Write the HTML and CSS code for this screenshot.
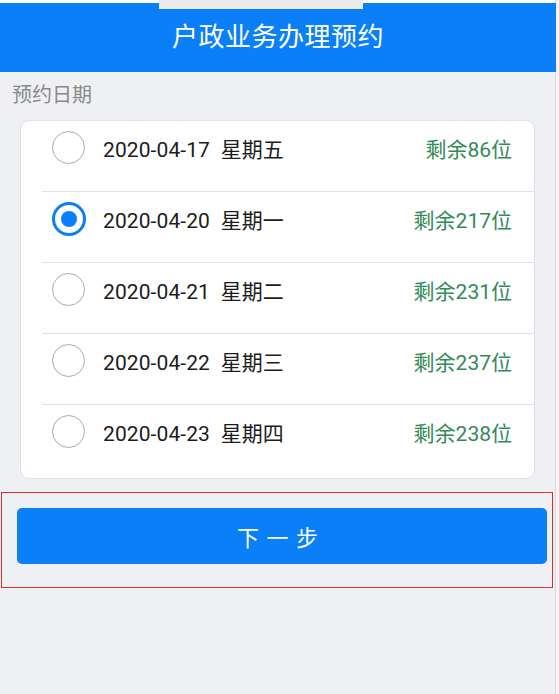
FILE: index.html
```html
<!DOCTYPE html>
<html lang="zh-CN">
<head>
<meta charset="utf-8">
<title>户政业务办理预约</title>
<link rel="stylesheet" href="styles.css">
</head>
<body>
<div class="page">
  <div class="statusbar"><div class="tab"></div></div>
  <header class="header">户政业务办理预约</header>
  <main class="content">
    <div class="label">预约日期</div>
    <div class="card">
      <div class="row first">
        <span class="radio"></span>
        <span class="date">2020-04-17&nbsp;&nbsp;星期五</span>
        <span class="left">剩余86位</span>
      </div>
      <div class="row">
        <span class="radio checked"></span>
        <span class="date">2020-04-20&nbsp;&nbsp;星期一</span>
        <span class="left">剩余217位</span>
      </div>
      <div class="row">
        <span class="radio"></span>
        <span class="date">2020-04-21&nbsp;&nbsp;星期二</span>
        <span class="left">剩余231位</span>
      </div>
      <div class="row">
        <span class="radio"></span>
        <span class="date">2020-04-22&nbsp;&nbsp;星期三</span>
        <span class="left">剩余237位</span>
      </div>
      <div class="row">
        <span class="radio"></span>
        <span class="date">2020-04-23&nbsp;&nbsp;星期四</span>
        <span class="left">剩余238位</span>
      </div>
    </div>
    <div class="action">
      <button class="next">下 一 步</button>
    </div>
  </main>
</div>
</body>
</html>
```
FILE: styles.css
```css
html, body {
  margin: 0;
  padding: 0;
  background: #f5f5f7;
}
body {
  font-family: Roboto, "Noto Sans CJK SC", sans-serif;
  width: 559px;
  height: 694px;
  overflow: hidden;
}
.page {
  width: 556px;
  height: 694px;
  background: #eff0f4;
  border-right: 1px solid #d9dadf;
  box-sizing: border-box;
}
.statusbar {
  height: 3px;
  background: #ffffff;
  position: relative;
}
.tab {
  position: absolute;
  left: 159px;
  top: 0;
  width: 204px;
  height: 9px;
  background: #ececec;
  z-index: 2;
}
.header {
  height: 69px;
  background: #0a7ff7;
  color: #ffffff;
  font-size: 26px;
  line-height: 69px;
  text-align: center;
  letter-spacing: 0.5px;
  width: 556px;
}
.content {
  padding-top: 9px;
}
.label {
  padding-left: 12px;
  font-size: 20px;
  line-height: 28px;
  color: #8a8a8a;
  height: 28px;
}
.card {
  margin: 11px 0 0 20px;
  width: 515px;
  box-sizing: border-box;
  background: #ffffff;
  border: 1px solid #dedfe3;
  border-radius: 9px;
}
.row {
  display: flex;
  align-items: center;
  margin-left: 21px;
  padding: 10px 22px 27px 10px;
  height: 33px;
  border-top: 1px solid #e2e2e2;
}
.row.first {
  border-top: none;
  padding-top: 10px;
}
.row:last-child {
  padding-bottom: 30px;
}
.radio {
  width: 33px;
  height: 33px;
  box-sizing: border-box;
  border: 1px solid #a9a9a9;
  border-radius: 50%;
  flex: none;
  display: flex;
  align-items: center;
  justify-content: center;
}
.radio.checked {
  width: 34px;
  height: 34px;
  margin-right: -1px;
  border: 3px solid #0a7ff7;
}
.radio.checked::after {
  content: "";
  width: 16px;
  height: 16px;
  border-radius: 50%;
  background: #0a7ff7;
}
.date {
  margin-left: 18px;
  font-size: 21px;
  color: #1c1c1c;
  flex: 1;
  white-space: nowrap;
  letter-spacing: 0.1px;
}
.left {
  font-size: 21px;
  color: #338a58;
  white-space: nowrap;
}
.action {
  margin: 13px 0 0 1px;
  width: 552px;
  height: 96px;
  box-sizing: border-box;
  border: 1px solid #d8302c;
  padding: 15px 5px 0 15px;
}
.next {
  display: block;
  width: 530px;
  height: 56px;
  border: none;
  border-radius: 5px;
  background: #0a7ff7;
  color: #ffffff;
  font-family: Roboto, "Noto Sans CJK SC", sans-serif;
  font-size: 22px;
  letter-spacing: 1px;
  padding: 0;
  padding-right: 8px;
}
```
